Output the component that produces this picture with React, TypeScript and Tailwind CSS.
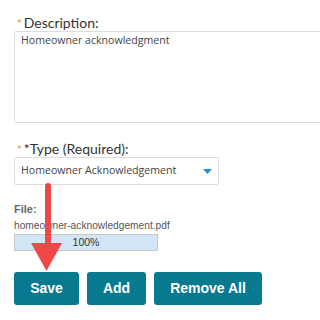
export default function App() {
  return (
    <div className="relative w-[320px] h-[320px] bg-white overflow-hidden" style={{ fontFamily: "Lato, 'Open Sans', sans-serif" }}>
      <div className="pt-[14px] pl-[14px]">
        <div className="flex items-baseline h-[17px] text-[14px] leading-[17px] text-[#333]">
          <span className="text-[#e8871e] text-[11px] ml-[3px] mr-[2px]">*</span>
          <span>Description:</span>
        </div>
        <div className="w-[320px] h-[92px] border border-[#dcdcdc] rounded-[2px] px-[6px] pt-[1px] text-[10.6px] text-[#444]" style={{ fontFamily: "'Open Sans', sans-serif" }}>
          Homeowner acknowledgment
        </div>
        <div className="mt-[17px] flex items-baseline h-[17px] text-[14px] leading-[17px] text-[#333]">
          <span className="text-[#e8871e] text-[11px] ml-[3px] mr-[2px]">*</span>
          <span>*Type (Required):</span>
        </div>
        <div className="w-[205px] h-[28px] border border-[#dcdcdc] rounded-[2px] flex items-center justify-between pl-[6px] pr-[6px] text-[10.6px] text-[#444]" style={{ fontFamily: "'Open Sans', sans-serif" }}>
          <span>Homeowner Acknowledgement</span>
          <svg width="9" height="5" viewBox="0 0 9 5"><path d="M0 0 H9 L4.5 5 Z" fill="#1e90e0" /></svg>
        </div>
        <div className="mt-[17px] text-[11px] font-bold text-[#666] leading-[14px]" style={{ fontFamily: "Arial, 'Liberation Sans', sans-serif" }}>File:</div>
        <div className="mt-[3px] text-[10.2px] text-[#555] leading-[14px]" style={{ fontFamily: "Arial, 'Liberation Sans', sans-serif" }}>homeowner-acknowledgement.pdf</div>
        <div className="mt-[1px] w-[144px] h-[17px] border border-[#c8c8c8] bg-[#d3e6f8] flex items-center justify-center text-[10.5px] text-[#333]" style={{ fontFamily: "Arial, 'Liberation Sans', sans-serif" }}>100%</div>
        <div className="mt-[21px] flex gap-[8px]" style={{ fontFamily: "Arial, 'Liberation Sans', sans-serif" }}>
          <button className="w-[65px] h-[33px] rounded-[3px] bg-[#087a8f] text-white font-bold text-[14px]">Save</button>
          <button className="w-[59px] h-[33px] rounded-[3px] bg-[#087a8f] text-white font-bold text-[14px]">Add</button>
          <button className="w-[108px] h-[33px] rounded-[3px] bg-[#087a8f] text-white font-bold text-[14px]">Remove All</button>
        </div>
      </div>
      <svg className="absolute left-0 top-0" width="320" height="320" viewBox="0 0 320 320">
        <line x1="48" y1="186" x2="48" y2="246" stroke="#f04848" strokeWidth="6" strokeLinecap="round" />
        <path d="M31 243 H62 L46.5 271 Z" fill="#f04848" />
      </svg>
    </div>
  );
}
